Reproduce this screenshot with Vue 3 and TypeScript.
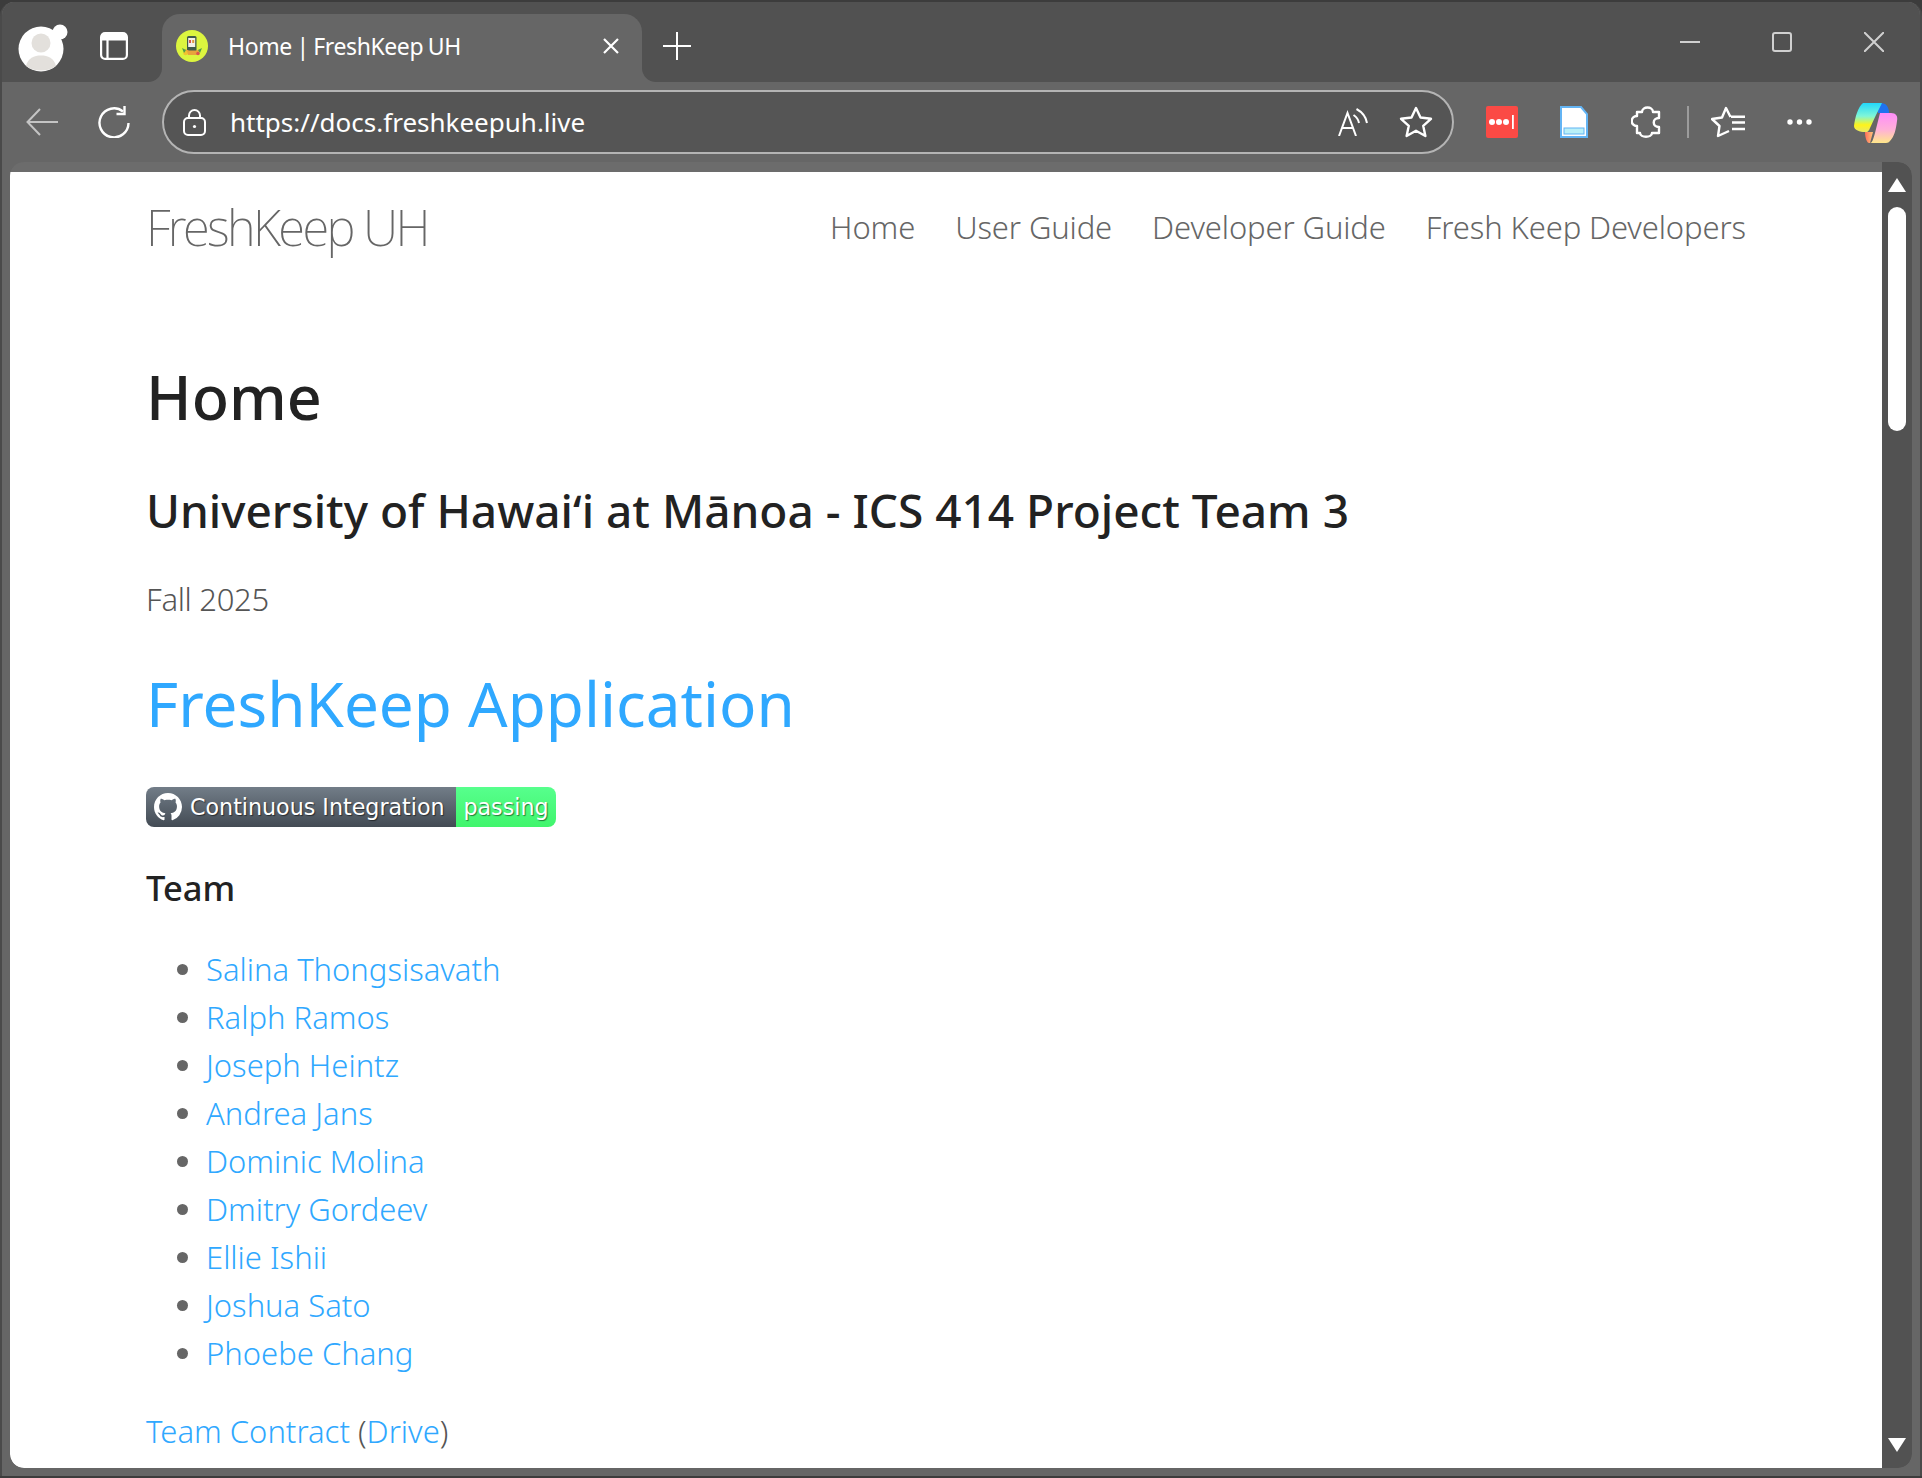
<template>
  <div class="window">
    <header class="titlebar">
      <div class="title-left">
        <span class="profile">
          <svg width="52" height="52" viewBox="0 0 52 52">
            <circle cx="24" cy="28" r="22.500" fill="#fff" />
            <circle cx="43" cy="11" r="7.500" fill="#fff" />
            <circle cx="24" cy="22" r="9.500" fill="#e3e0dc" />
            <path d="M9 45c2-8 8-10.500 15-10.500S37 37 39 45c-4 3-9 4.500-15 4.500S13 48 9 45z" fill="#e3e0dc" />
          </svg>
        </span>
        <span class="tabs-btn">
          <svg width="28" height="28" viewBox="0 0 28 28" fill="none" stroke="#fff" stroke-width="2.200">
            <rect x="1.100" y="1.100" width="25.800" height="25.800" rx="4" />
            <path d="M1.100 7.500h25.800M7.500 7.500v19.400" />
            <path d="M2 2h24v5.500H2z" fill="#fff" stroke="none" />
          </svg>
        </span>
      </div>
      <div class="tab-wrap">
        <div class="tab">
          <svg class="favicon" width="32" height="32" viewBox="0 0 32 32">
            <circle cx="16" cy="16" r="16" fill="#dcf53f" />
            <rect x="11" y="6" width="9.500" height="16" rx="1.500" fill="#3f5a4a" />
            <rect x="12.200" y="8" width="7" height="9" fill="#f4f1e6" />
            <rect x="13" y="10" width="2" height="3" fill="#d9534f" />
            <rect x="16.200" y="10" width="2" height="3" fill="#e09a3a" />
            <path d="M9 19l3 6h9l4-6-5 1.500h-7z" fill="#e8a33c" />
            <circle cx="9.500" cy="23" r="2.200" fill="#f2c230" />
            <path d="M6 18l4 2-2 3zM26 18l-4 2 2 3z" fill="#4f9d4a" />
            <circle cx="22" cy="23.500" r="1.800" fill="#d9534f" />
          </svg>
          <span class="tab-title">Home | FreshKeep UH</span>
          <svg class="tab-close" width="18" height="18" viewBox="0 0 18 18" stroke="#fff" stroke-width="2.200">
            <path d="M2 2l14 14M16 2L2 16" />
          </svg>
        </div>
      </div>
      <div class="title-rest">
        <span class="new-tab">
          <svg width="28" height="28" viewBox="0 0 28 28" stroke="#fff" stroke-width="2">
            <path d="M14 0v28M0 14h28" />
          </svg>
        </span>
        <div class="win-controls">
          <svg width="20" height="20" viewBox="0 0 20 20" stroke="#d0d0d0" stroke-width="2">
            <path d="M0 10h20" />
          </svg>
          <svg width="20" height="20" viewBox="0 0 20 20" fill="none" stroke="#d0d0d0" stroke-width="2">
            <rect x="1" y="1" width="18" height="18" rx="2" />
          </svg>
          <svg width="20" height="20" viewBox="0 0 20 20" stroke="#d0d0d0" stroke-width="2">
            <path d="M0 0l20 20M20 0L0 20" />
          </svg>
        </div>
      </div>
    </header>

    <div class="toolbar">
      <svg class="nav-icon" width="32" height="28" viewBox="0 0 32 28" fill="none" stroke="#c4c4c4" stroke-width="2">
        <path d="M32 14H2M14 1L1.500 14 14 27" />
      </svg>
      <svg class="nav-icon reload" width="32" height="32" viewBox="0 0 32 32" fill="none" stroke="#fff" stroke-width="2.400">
        <path d="M25 5.500A14.500 14.500 0 1 0 30.500 17" />
        <path d="M26.500 0v8h-8" />
      </svg>
      <div class="address">
        <svg width="23" height="27" viewBox="0 0 23 27" fill="none" stroke="#fff" stroke-width="2">
          <rect x="1" y="9" width="21" height="17" rx="4" />
          <path d="M6 9V6.500a5.500 5.500 0 0 1 11 0V9" />
          <circle cx="11.500" cy="17.500" r="1.600" fill="#fff" stroke="none" />
        </svg>
        <span class="url">https://docs.freshkeepuh.live</span>
        <svg class="read-aloud" width="30" height="28" viewBox="0 0 30 28" fill="none" stroke="#fff" stroke-width="2">
          <path d="M1 28L9.500 5 18 28M4 20h11" />
          <path d="M15.500 7c3 2 5 5 5.500 8M18.500 1C24 4 28 9 29 15" />
        </svg>
        <svg width="34" height="32" viewBox="0 0 34 32" fill="none" stroke="#fff" stroke-width="2.400" stroke-linejoin="round">
          <path d="M17 2l4.500 9.500 10.500 1.300-7.800 7 2.200 10.200-9.400-5.200L7.600 30l2.200-10.200-7.800-7 10.500-1.300z" />
        </svg>
      </div>
      <div class="extensions">
        <svg class="ext-pass" width="32" height="32" viewBox="0 0 32 32">
          <rect width="32" height="32" rx="2" fill="#fb4a45" />
          <circle cx="6" cy="16" r="3" fill="#fff" />
          <circle cx="13" cy="16" r="3" fill="#fff" />
          <circle cx="20" cy="16" r="3" fill="#fff" />
          <rect x="26" y="9" width="1.800" height="14" fill="#fff" />
        </svg>
        <svg class="ext-doc" width="28" height="32" viewBox="0 0 28 32">
          <path d="M1 1h20l6 7v23H1z" fill="#fff" stroke="#63b4f4" stroke-width="2" />
          <rect x="4" y="22" width="20" height="6" fill="#b9f0f8" stroke="#63b4f4" />
        </svg>
        <svg class="ext-puzzle" width="30" height="32" viewBox="-1 -1 30 32" fill="none" stroke="#fff" stroke-width="2.400" stroke-linejoin="round">
          <path d="M5 5h5c0-6 11-6 11 0h6v6c-7 0-7 9 0 9v6h-7c0 5-12 5-12 0H5v-7c-7 0-7-10 0-10z" />
        </svg>
        <span class="divider"></span>
        <svg class="ext-favs" width="34" height="32" viewBox="0 0 34 32" fill="none" stroke="#fff" stroke-width="2.400" stroke-linejoin="round">
          <path d="M18 25L7 30l1.500-10L1 13l10-1.500L15 2l4.500 9" />
          <path d="M20 10.700h14M21 16.500h13M21 23h13" />
        </svg>
        <svg class="ext-dots" width="25" height="6" viewBox="0 0 25 6" fill="#fff">
          <circle cx="3" cy="3" r="2.700" />
          <circle cx="12.500" cy="3" r="2.700" />
          <circle cx="22" cy="3" r="2.700" />
        </svg>
        <svg class="ext-copilot" width="44" height="41" viewBox="0 0 44 41">
          <defs>
            <linearGradient id="cpA" x1="0" y1="0" x2="0" y2="1">
              <stop offset="0" stop-color="#22d8fb" />
              <stop offset="0.450" stop-color="#7ff6d8" />
              <stop offset="0.750" stop-color="#fff41a" />
              <stop offset="1" stop-color="#e8e86a" />
            </linearGradient>
            <linearGradient id="cpB" x1="0" y1="0" x2="0" y2="1">
              <stop offset="0" stop-color="#ff8dfa" />
              <stop offset="0.550" stop-color="#ffb0d8" />
              <stop offset="1" stop-color="#ffe78a" />
            </linearGradient>
            <linearGradient id="cpC" x1="0" y1="0" x2="1" y2="0">
              <stop offset="0" stop-color="#ff6f5a" />
              <stop offset="1" stop-color="#ffc47a" />
            </linearGradient>
          </defs>
          <path d="M24 1h3c5 0 8 4 8 10H24z" fill="#1f72f0" />
          <path d="M9 1h19l-6 12-6 13c-1 3-3 5-5 4-5 0-11-2-11-6C1 15 4 5 9 1z" fill="url(#cpA)" />
          <path d="M11 30h8l-3 11h-1c-2 0-4-5-4-11z" fill="url(#cpC)" />
          <path d="M26 11h11c5 0 7 3 6 8-1 9-3 16-7 20-1 1-2 2-4 2H16c2 0 3-3 5-10z" fill="url(#cpB)" />
        </svg>
      </div>
    </div>

    <div class="viewport">
      <main class="page">
        <div class="container">
          <nav class="navbar">
            <span class="brand">FreshKeep UH</span>
            <ul class="nav-links">
              <li v-for="link in navLinks" :key="link">{{ link }}</li>
            </ul>
          </nav>

          <h1 class="page-title">Home</h1>
          <h2 class="subtitle">University of Hawaiʻi at Mānoa - ICS 414 Project Team 3</h2>
          <p class="term">Fall 2025</p>
          <h1 class="app-title"><a href="#">FreshKeep Application</a></h1>

          <div class="badge">
            <span class="badge-name">
              <svg width="28" height="28" viewBox="0 0 16 16" fill="#fff">
                <path d="M8 0C3.580 0 0 3.580 0 8c0 3.540 2.290 6.530 5.470 7.590.4.070.55-.17.55-.38 0-.19-.01-.82-.01-1.490-2.010.37-2.530-.49-2.690-.94-.09-.23-.48-.94-.82-1.130-.28-.15-.68-.52-.01-.53.63-.01 1.080.58 1.230.82.72 1.210 1.870.87 2.330.66.07-.52.28-.87.51-1.070-1.780-.2-3.640-.89-3.640-3.950 0-.87.31-1.590.82-2.150-.08-.2-.36-1.020.08-2.120 0 0 .67-.21 2.200.82.64-.18 1.320-.27 2-.27.68 0 1.360.09 2 .27 1.530-1.040 2.200-.82 2.200-.82.44 1.100.16 1.920.08 2.120.51.56.82 1.270.82 2.150 0 3.070-1.870 3.750-3.650 3.950.29.25.54.73.54 1.480 0 1.070-.01 1.930-.01 2.200 0 .21.15.46.55.38A8.013 8.013 0 0 0 16 8c0-4.420-3.580-8-8-8z" />
              </svg>
              Continuous Integration
            </span>
            <span class="badge-status">passing</span>
          </div>

          <h3 class="team-heading">Team</h3>
          <ul class="team">
            <li v-for="name in team" :key="name"><a href="#">{{ name }}</a></li>
          </ul>
          <p class="contract"><a href="#">Team Contract</a> (<a href="#">Drive</a>)</p>
        </div>
      </main>
      <aside class="scrollbar">
        <span class="arrow up"></span>
        <span class="thumb"></span>
        <span class="arrow down"></span>
      </aside>
    </div>
  </div>
</template>

<script setup lang="ts">
const navLinks: string[] = ['Home', 'User Guide', 'Developer Guide', 'Fresh Keep Developers']

const team: string[] = [
  'Salina Thongsisavath',
  'Ralph Ramos',
  'Joseph Heintz',
  'Andrea Jans',
  'Dominic Molina',
  'Dmitry Gordeev',
  'Ellie Ishii',
  'Joshua Sato',
  'Phoebe Chang',
]
</script>

<style>
html,
body {
  margin: 0;
  background: #3c3c3c;
  overflow: hidden;
}
</style>

<style scoped>
.window {
  box-sizing: border-box;
  width: 1922px;
  height: 1474px;
  margin-top: 2px;
  display: flex;
  flex-direction: column;
  background: #666;
  border-radius: 14px 14px 0 0;
  border-left: 2px solid #4a4a4a;
  border-right: 2px solid #4a4a4a;
  overflow: hidden;
  font-family: "Noto Sans", "Open Sans", sans-serif;
}

.titlebar {
  height: 80px;
  flex: none;
  display: flex;
  background: #666;
}

.title-left {
  width: 160px;
  box-sizing: border-box;
  display: flex;
  align-items: flex-start;
  padding: 19px 0 0 15px;
  background: #515151;
  border-bottom-right-radius: 14px;
}

.profile {
  display: flex;
  width: 83px;
}

.tabs-btn {
  display: flex;
  margin-top: 11px;
}

.tab-wrap {
  width: 480px;
  background: #515151;
  padding-top: 12px;
  box-sizing: border-box;
  display: flex;
}

.tab {
  width: 100%;
  box-sizing: border-box;
  display: flex;
  align-items: center;
  padding: 0 22px 4px 14px;
  background: #666;
  border-radius: 18px 18px 0 0;
  color: #fff;
  font-size: 23px;
}

.tab-title {
  margin-left: 20px;
  flex: 1;
  word-spacing: -1px;
  letter-spacing: -0.400px;
}

.tab-close {
  flex: none;
}

.title-rest {
  flex: 1;
  display: flex;
  background: #515151;
  border-bottom-left-radius: 14px;
}

.new-tab {
  display: flex;
  align-items: flex-start;
  padding: 30px 0 0 21px;
}

.win-controls {
  margin-left: auto;
  display: flex;
  align-items: flex-start;
  gap: 72px;
  padding: 30px 36px 0 0;
}

.toolbar {
  height: 80px;
  flex: none;
  display: flex;
  align-items: center;
  padding: 0 0 0 24px;
  background: #666;
}

.nav-icon {
  flex: none;
}

.reload {
  margin-left: 40px;
}

.address {
  width: 1292px;
  height: 64px;
  margin-left: 32px;
  box-sizing: border-box;
  display: flex;
  align-items: center;
  padding: 0 19px 0 19px;
  background: #555;
  border: 2px solid #b4b4b4;
  border-radius: 32px;
  color: #fff;
}

.url {
  margin-left: 24px;
  flex: 1;
  font-size: 26px;
}

.read-aloud {
  margin-right: 31px;
}

.extensions {
  margin-left: 32px;
  display: flex;
  align-items: center;
}

.extensions > svg {
  flex: none;
}

.ext-doc {
  margin-left: 42px;
}

.ext-puzzle {
  margin-left: 43px;
}

.divider {
  width: 2px;
  height: 32px;
  margin: 0 22px 0 26px;
  background: #9c9c9c;
}

.ext-dots {
  margin-left: 42px;
}

.ext-copilot {
  margin-left: 42px;
}

.viewport {
  flex: 1;
  min-height: 0;
  display: flex;
  margin: 0 8px 8px;
  border-radius: 14px;
  background: #6c6c6c;
  overflow: hidden;
}

.page {
  flex: 1;
  min-width: 0;
  margin-top: 10px;
  background: #fff;
  overflow: hidden;
  border-bottom-left-radius: 14px;
}

.container {
  width: 1600px;
  margin: 0 auto;
  font-weight: 300;
  font-size: 31px;
  line-height: 48px;
  color: #555;
}

.navbar {
  height: 110px;
  display: flex;
  align-items: center;
  justify-content: space-between;
}

.brand {
  font-size: 49px;
  font-weight: 200;
  color: #666;
  letter-spacing: -2.600px;
}

.nav-links {
  display: flex;
  gap: 40px;
  margin: 0;
  padding: 0;
  list-style: none;
  color: #666;
  letter-spacing: -0.120px;
}

.page-title {
  margin: 72px 0 0;
  font-size: 61px;
  line-height: 86px;
  font-weight: 500;
  color: #222;
}

.subtitle {
  margin: 38px 0 0;
  font-size: 46px;
  line-height: 64px;
  font-weight: 500;
  color: #222;
}

.term {
  margin: 33px 0 0;
  letter-spacing: -0.300px;
}

.app-title {
  margin: 37px 0 0;
  font-size: 62px;
  line-height: 86px;
  font-weight: 400;
}

a {
  color: #2fa8ff;
  text-decoration: none;
}

.badge {
  display: inline-flex;
  height: 40px;
  margin-top: 41px;
  border-radius: 8px;
  overflow: hidden;
  color: #fff;
  font-family: "DejaVu Sans", Verdana, sans-serif;
  font-weight: 400;
  font-size: 22.200px;
  line-height: 40px;
  text-shadow: 1px 1px 1px rgba(0, 0, 0, 0.5);
}

.badge-name {
  width: 310px;
  display: flex;
  align-items: center;
  gap: 8px;
  padding-left: 8px;
  box-sizing: border-box;
  background: linear-gradient(#727d88, #434b54);
}

.badge-status {
  width: 100px;
  text-align: center;
  background: linear-gradient(#57ff8d, #40f56c);
}

.team-heading {
  margin: 30px 0 0;
  font-size: 34.500px;
  line-height: 50px;
  font-weight: 500;
  color: #222;
}

.team {
  margin: 32px 0 0;
  padding-left: 60px;
}

.team li::marker {
  color: #666;
}

.contract {
  margin: 30px 0 0;
}

.scrollbar {
  flex: none;
  width: 30px;
  display: flex;
  flex-direction: column;
  align-items: center;
  padding: 16px 0 16px;
  box-sizing: border-box;
  background: #525252;
  border-radius: 0 14px 14px 0;
}

.arrow {
  width: 0;
  height: 0;
  border-left: 9px solid transparent;
  border-right: 9px solid transparent;
}

.arrow.up {
  border-bottom: 14px solid #fff;
}

.arrow.down {
  margin-top: auto;
  border-top: 14px solid #fff;
}

.thumb {
  width: 18px;
  height: 224px;
  margin-top: 15px;
  border-radius: 9px;
  background: #fff;
}
</style>
